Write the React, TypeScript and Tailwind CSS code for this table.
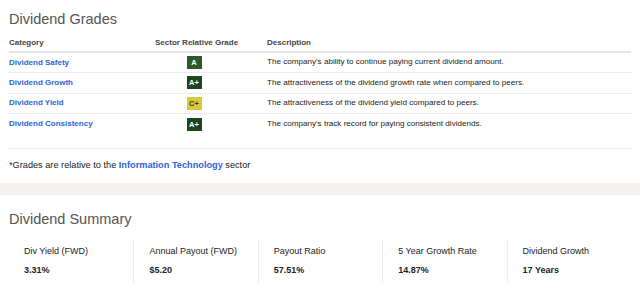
const grades = [
  { name: 'Dividend Safety', grade: 'A', tone: 'bg-[#2e5a2a] text-white', desc: "The company's ability to continue paying current dividend amount." },
  { name: 'Dividend Growth', grade: 'A+', tone: 'bg-[#1f4520] text-white', desc: 'The attractiveness of the dividend growth rate when compared to peers.' },
  { name: 'Dividend Yield', grade: 'C+', tone: 'bg-[#d6cb3c] text-[#3a3a1a]', desc: 'The attractiveness of the dividend yield compared to peers.' },
  { name: 'Dividend Consistency', grade: 'A+', tone: 'bg-[#1f4520] text-white', desc: "The company's track record for paying consistent dividends." },
];

const stats = [
  { label: 'Div Yield (FWD)', value: '3.31%' },
  { label: 'Annual Payout (FWD)', value: '$5.20' },
  { label: 'Payout Ratio', value: '57.51%' },
  { label: '5 Year Growth Rate', value: '14.87%' },
  { label: 'Dividend Growth', value: '17 Years' },
];

export default function App() {
  return (
    <div className="w-[640px] h-[290px] overflow-hidden bg-white font-['Liberation_Sans',Arial,sans-serif] text-[#222]">
      {/* Grades */}
      <section className="px-[9px] pt-[9px]">
        <h2 className="text-[14.5px] leading-[20px] font-normal text-[#555]">Dividend Grades</h2>
        <table className="mt-[5px] w-[622px] border-collapse text-[8px]">
          <thead>
            <tr className="border-b-2 border-[#e6e6e6] text-[#444]">
              <th className="h-[18px] w-[146px] text-left font-bold">Category</th>
              <th className="w-[112px] text-left font-bold pl-0">Sector Relative Grade</th>
              <th className="text-left font-bold">Description</th>
            </tr>
          </thead>
          <tbody>
            {grades.map((g, i) => (
              <tr key={g.name} className={i < grades.length - 1 ? 'border-b border-[#ececec]' : ''}>
                <td className="h-[20.6px] font-bold text-[#2f63d6]">{g.name}</td>
                <td className="pr-[34px]">
                  <div className="flex justify-center">
                    <span className={`flex h-[13px] w-[15px] items-center justify-center text-[7.5px] font-bold ${g.tone}`}>
                      {g.grade}
                    </span>
                  </div>
                </td>
                <td className="text-[8.1px] text-[#222]">{g.desc}</td>
              </tr>
            ))}
          </tbody>
        </table>
        <div className="mt-[14px] w-[622px] border-t border-[#ececec] pt-[10px] pb-[12px] text-[9.2px] leading-[12px] text-[#222]">
          *Grades are relative to the{' '}
          <span className="font-bold text-[#2f63d6]">Information Technology</span> sector
        </div>
      </section>

      <div className="h-[12px] bg-[#f4f1f0]" />

      {/* Summary */}
      <section className="px-[9px] pt-[14px]">
        <h2 className="text-[14.5px] leading-[20px] font-normal text-[#555]">Dividend Summary</h2>
        <div className="mt-[10px] grid w-[622px] grid-cols-5">
          {stats.map((s, i) => (
            <div
              key={s.label}
              className={`flex h-[44px] flex-col justify-center gap-[8px] pl-[15px] ${i > 0 ? 'border-l border-[#ececec]' : ''}`}
            >
              <span className="text-[9px] leading-[11px] text-[#222]">{s.label}</span>
              <span className="text-[9px] leading-[11px] font-bold text-[#222]">{s.value}</span>
            </div>
          ))}
        </div>
      </section>
    </div>
  );
}
